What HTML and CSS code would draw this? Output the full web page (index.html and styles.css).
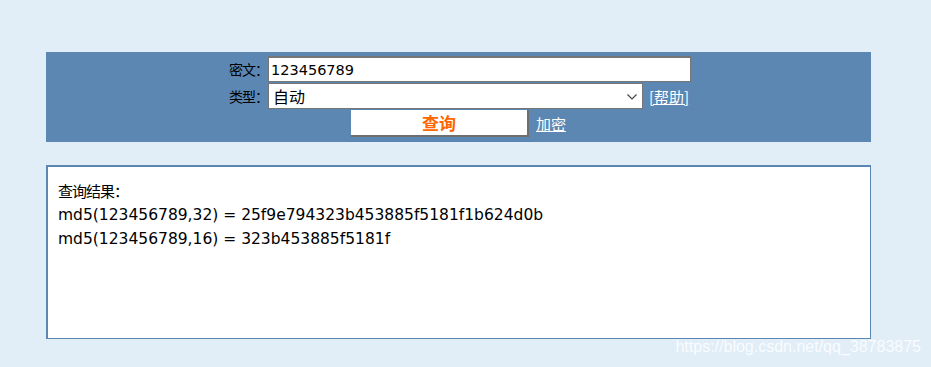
FILE: index.html
```html
<!DOCTYPE html>
<html lang="zh-CN">
<head>
    <meta charset="UTF-8">
    <title>MD5</title>
    <link rel="stylesheet" href="styles.css">
</head>
<body>
    <div class="panel">
        <div class="form">
            <label class="label" for="txt">密文：</label>
            <div class="field"><input type="text" id="txt" class="txt" value="123456789"></div>

            <label class="label" for="type">类型：</label>
            <div class="field">
                <div class="sel-wrap">
                    <select id="type" class="sel"><option>自动</option></select>
                    <svg class="arrow" width="10" height="6" viewBox="0 0 10 6"><path d="M0.5 0.5 L5 5 L9.5 0.5" fill="none" stroke="#444" stroke-width="1.2"/></svg>
                </div>
                <a href="#" class="link">[帮助]</a>
            </div>

            <div></div>
            <div class="field btn-row">
                <button class="btn">查询</button>
                <a href="#" class="link">加密</a>
            </div>
        </div>
    </div>

    <div class="result">
        <div class="title">查询结果：</div>
        <div class="line">md5(123456789,32) = 25f9e794323b453885f5181f1b624d0b</div>
        <div class="line">md5(123456789,16) = 323b453885f5181f</div>
    </div>

    <div class="mark">https://blog.csdn.net/qq_38783875</div>
</body>
</html>
```

FILE: styles.css
```css
body {
    margin: 0;
    padding: 52px 0 0 46px;
    background-color: #e1edf7;
    font-family: "DejaVu Sans", "Noto Sans CJK SC", sans-serif;
    font-size: 13px;
    color: #000;
    height: 315px;
    position: relative;
    overflow: hidden;
}

.panel {
    width: 825px;
    height: 90px;
    background-color: #5c87b2;
    box-sizing: border-box;
    padding-top: 4px;
}

.form {
    display: grid;
    grid-template-columns: 222px auto;
    row-gap: 1px;
}

.label {
    text-align: right;
    padding-right: 0;
    line-height: 26px;
    font-family: "Noto Sans CJK SC", sans-serif;
    font-size: 14px;
    letter-spacing: -1px;
    white-space: nowrap;
}

.field {
    display: flex;
    align-items: center;
    gap: 6px;
}

.txt {
    width: 423px;
    height: 26px;
    box-sizing: border-box;
    border: 1px solid #767676;
    border-top-width: 2px;
    padding: 0 2px;
    font-family: "DejaVu Sans", sans-serif;
    font-size: 14.5px;
    margin: 0;
}

.sel-wrap {
    position: relative;
    display: flex;
}

.sel {
    width: 375px;
    height: 26px;
    box-sizing: border-box;
    border: 1px solid #767676;
    background: #fff;
    padding: 0 4px;
    font-family: "Noto Sans CJK SC", sans-serif;
    font-size: 16px;
    margin: 0;
    border-radius: 0;
    appearance: none;
    -webkit-appearance: none;
}

.arrow {
    position: absolute;
    right: 6px;
    top: 11px;
    pointer-events: none;
}

.link {
    color: #fff;
    font-family: "Noto Sans CJK SC", sans-serif;
    font-size: 15px;
}

.btn-row {
    padding-left: 83px;
    gap: 7px;
}

.btn {
    width: 178px;
    height: 27px;
    background: #fff;
    border: none;
    border-right: 2px solid #6e6e6e;
    border-bottom: 2px solid #6e6e6e;
    color: #ff6600;
    font-weight: bold;
    font-size: 17px;
    font-family: "Noto Sans CJK SC", sans-serif;
    padding: 0;
    line-height: 24px;
}

.result {
    margin-top: 23px;
    width: 825px;
    height: 174px;
    box-sizing: border-box;
    background: #fff;
    border: 2px solid #5c87b2;
    border-right-width: 1px;
    border-bottom-width: 1px;
    padding: 12px 10px;
}

.title {
    font-family: "Noto Sans CJK SC", sans-serif;
    font-size: 15px;
    letter-spacing: -1px;
    line-height: 24px;
}

.line {
    font-size: 15.5px;
    line-height: 24px;
}

.mark {
    position: absolute;
    right: 10px;
    top: 338px;
    color: rgba(255, 255, 255, 0.85);
    font-family: "Liberation Sans", sans-serif;
    font-size: 16px;
}
```
